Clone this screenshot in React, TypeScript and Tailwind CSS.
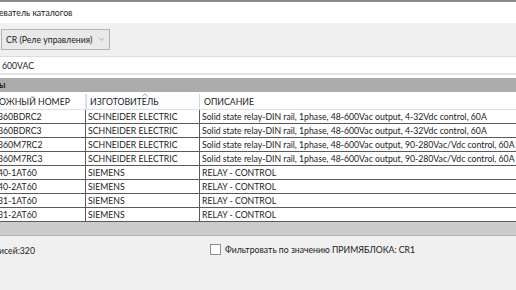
import { ChevronDown } from 'lucide-react';

const rows = [
  ['360BDRC2', 'SCHNEIDER ELECTRIC', 'Solid state relay-DIN rail, 1phase, 48-600Vac output, 4-32Vdc control, 60A'],
  ['360BDRC3', 'SCHNEIDER ELECTRIC', 'Solid state relay-DIN rail, 1phase, 48-600Vac output, 4-32Vdc control, 60A'],
  ['360M7RC2', 'SCHNEIDER ELECTRIC', 'Solid state relay-DIN rail, 1phase, 48-600Vac output, 90-280Vac/Vdc control, 60A'],
  ['360M7RC3', 'SCHNEIDER ELECTRIC', 'Solid state relay-DIN rail, 1phase, 48-600Vac output, 90-280Vac/Vdc control, 60A'],
  ['40-1AT60', 'SIEMENS', 'RELAY - CONTROL'],
  ['40-2AT60', 'SIEMENS', 'RELAY - CONTROL'],
  ['31-1AT60', 'SIEMENS', 'RELAY - CONTROL'],
  ['31-2AT60', 'SIEMENS', 'RELAY - CONTROL'],
];

export default function App() {
  return (
    <div
      className="w-[516px] h-[290px] overflow-hidden bg-[#f0f0f0] text-[8.7px] text-[#1a1a1a] flex flex-col whitespace-nowrap"
      style={{ fontFamily: 'Lato, "Open Sans", sans-serif' }}
    >
      {/* Title bar */}
      <div className="h-[23px] shrink-0 bg-white border-t-2 border-[#8a8a8a] flex items-center">
        <span className="-ml-[1px]">еватель каталогов</span>
      </div>

      {/* Toolbar */}
      <div className="h-[34px] shrink-0 flex items-center px-[1px] border-b border-[#dcdcdc]">
        <div className="h-[21px] w-[109px] flex items-center justify-between bg-[#e9e9e9] border border-[#b4b4b4] pl-[4px] pr-[4px]">
          <span>CR (Реле управления)</span>
          <ChevronDown className="w-[7px] h-[7px] text-[#707070]" strokeWidth={2} />
        </div>
      </div>

      {/* Filter input */}
      <div className="h-[18px] shrink-0 bg-white flex items-center pl-[2px] pt-[1px] border-b-2 border-[#e3e3e3]">
        600VAC
      </div>
      <div className="h-[3px] shrink-0 bg-white" />

      {/* Group band */}
      <div className="h-[14px] shrink-0 bg-[#ababab] flex items-center font-bold">
        <span className="-ml-[1px]">ы</span>
      </div>

      {/* Grid */}
      <div className="shrink-0 bg-white">
        <div className="h-[18px] flex pt-[2px] border-b border-[#e0e0e0]">
          <div className="w-[86px] shrink-0 flex items-center border-r border-[#e4e4e4] overflow-hidden">
            <span className="-ml-[1px]">ОЖНЫЙ НОМЕР</span>
          </div>
          <div className="relative w-[114px] shrink-0 flex items-center pl-[3px] border-x border-[#bcdcf4] bg-[#fbfdff]">
            ИЗГОТОВИТЕЛЬ
            <svg className="absolute left-[55px] -top-[1px]" width="6" height="4" viewBox="0 0 6 4">
              <path d="M0.5 3.5 L3 0.8 L5.5 3.5" fill="none" stroke="#9aa7b4" strokeWidth="0.9" />
            </svg>
          </div>
          <div className="flex-1 flex items-center pl-[4px]">ОПИСАНИЕ</div>
        </div>
        {rows.map((r, i) => (
          <div key={i} className="h-[14px] flex border-b border-[#5a5a5a]">
            <div className="w-[86px] shrink-0 flex items-center border-r border-[#5a5a5a] overflow-hidden">
              <span className="-ml-[2px]">{r[0]}</span>
            </div>
            <div className="w-[114px] shrink-0 flex items-center pl-[2px] border-r border-[#5a5a5a]">
              {r[1]}
            </div>
            <div className="flex-1 flex items-center pl-[2px] overflow-hidden">{r[2]}</div>
          </div>
        ))}
      </div>

      {/* Bottom band */}
      <div className="h-[14px] shrink-0 bg-[#cccccc] border-b border-[#a9b8c6]" />

      {/* Status */}
      <div className="flex items-start pt-[7px]">
        <div className="w-[210px] shrink-0 pt-[1px]">
          <span className="-ml-[1px]">исей:320</span>
        </div>
        <label className="flex items-center gap-[4px]">
          <span className="w-[11px] h-[11px] bg-white border border-[#8f8f8f] inline-block" />
          <span>Фильтровать по значению ПРИМЯБЛОКА: CR1</span>
        </label>
      </div>
    </div>
  );
}
